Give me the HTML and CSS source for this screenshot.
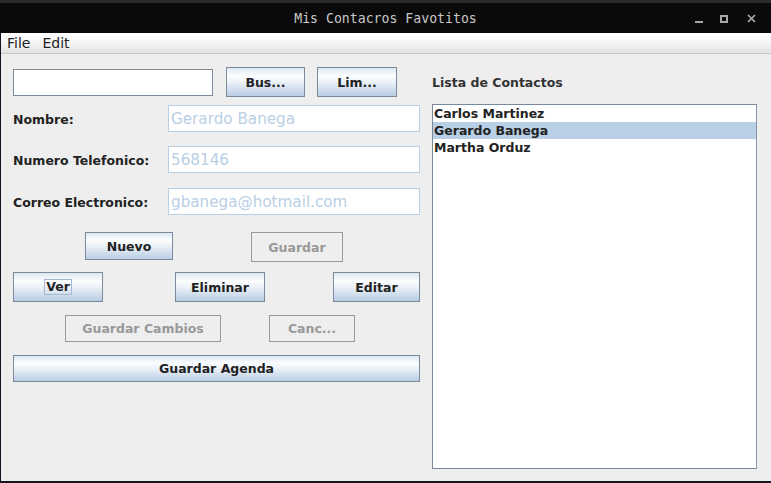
FILE: index.html
```html
<!DOCTYPE html>
<html>
<head>
<meta charset="utf-8">
<link rel="stylesheet" href="styles.css">
</head>
<body>
<div class="screen">
  <div class="desk-strip"></div>
  <div class="titlebar">
    <span class="title">Mis Contacros Favotitos</span>
    <div class="controls">
      <span class="ctl ctl-min"></span>
      <span class="ctl ctl-max"></span>
      <svg class="ctl-close" width="9" height="9" viewBox="0 0 9 9"><path d="M1 1 L8 8 M8 1 L1 8" stroke="#b0b0b0" stroke-width="1.6"/></svg>
    </div>
  </div>
  <div class="window">
    <div class="menubar">
      <span class="menu">File</span>
      <span class="menu">Edit</span>
    </div>
    <div class="content">
      <div class="left">
        <div class="row row-search">
          <div class="search"></div>
          <button class="btn btn-bus">Bus...</button>
          <button class="btn btn-lim">Lim...</button>
        </div>
        <div class="row field-row r-nombre">
          <span class="label">Nombre:</span>
          <div class="field">Gerardo Banega</div>
        </div>
        <div class="row field-row r-tel">
          <span class="label">Numero Telefonico:</span>
          <div class="field">568146</div>
        </div>
        <div class="row field-row r-mail">
          <span class="label">Correo Electronico:</span>
          <div class="field">gbanega@hotmail.com</div>
        </div>
        <div class="row r-nuevo">
          <button class="btn btn-nuevo">Nuevo</button>
          <button class="btn disabled btn-guardar">Guardar</button>
        </div>
        <div class="row r-ver">
          <button class="btn btn-ver"><span class="focus">Ver</span></button>
          <button class="btn btn-elim">Eliminar</button>
          <button class="btn btn-edit">Editar</button>
        </div>
        <div class="row r-cambios">
          <button class="btn disabled btn-cambios">Guardar Cambios</button>
          <button class="btn disabled btn-canc">Canc...</button>
        </div>
        <div class="row r-agenda">
          <button class="btn btn-agenda">Guardar Agenda</button>
        </div>
      </div>
      <div class="right">
        <div class="list-label">Lista de Contactos</div>
        <div class="list">
          <div class="item">Carlos Martinez</div>
          <div class="item selected">Gerardo Banega</div>
          <div class="item">Martha Orduz</div>
        </div>
      </div>
    </div>
  </div>
  <div class="bottom-strip"></div>
</div>
</body>
</html>
```

FILE: styles.css
```css
* { box-sizing: border-box; }
html, body { margin: 0; padding: 0; }
body {
  width: 771px;
  height: 483px;
  overflow: hidden;
  background: #1a1e26;
  font-family: "DejaVu Sans", sans-serif;
}
.screen {
  width: 771px;
  height: 483px;
  display: flex;
  flex-direction: column;
}
.desk-strip {
  height: 3px;
  background: #2a2c30;
}
.titlebar {
  height: 30px;
  background: #0a0a0a;
  display: flex;
  align-items: center;
  justify-content: center;
  position: relative;
}
.title {
  font-family: "DejaVu Sans Mono", monospace;
  font-size: 13.2px;
  color: #c8c8c8;
  margin-left: 0;
}
.controls {
  position: absolute;
  right: 0;
  top: 0;
  height: 30px;
  display: flex;
  align-items: center;
}
.ctl-min {
  width: 8px;
  height: 2px;
  background: #a8a8a8;
  margin-top: 8px;
  margin-right: 17px;
}
.ctl-max {
  width: 8px;
  height: 8px;
  border: 2px solid #a8a8a8;
  margin-top: 1px;
  margin-right: 19px;
}
.ctl-close {
  margin-right: 15px;
  margin-top: 0px;
}
.window {
  flex: 1;
  min-height: 0;
  display: flex;
  flex-direction: column;
  background: #eeeeee;
  border-left: 1px solid #0f1520;
}
.menubar {
  height: 21px;
  background: linear-gradient(#ffffff, #f2f2f2 60%, #e2e2e2);
  border-bottom: 1px solid #c8c8c8;
  display: flex;
  align-items: center;
  padding-left: 6px;
  gap: 12px;
  font-size: 14px;
  color: #222;
}
.content {
  display: flex;
  padding-left: 12px;
  gap: 12px;
}
.left {
  width: 407px;
  display: flex;
  flex-direction: column;
}
.row { display: flex; align-items: center; }
.row-search { margin-top: 13px; height: 30px; }
.search {
  width: 200px;
  height: 27px;
  background: #fff;
  border: 1px solid #7a8a99;
  border-top-color: #7f8b96;
}
.btn {
  font-family: "DejaVu Sans", sans-serif;
  font-weight: bold;
  font-size: 12.5px;
  color: #222;
  height: 30px;
  border: 1px solid #7a8a99;
  background: linear-gradient(#dde8f3 0%, #fcfdfe 28%, #f0f5fa 45%, #b9cde3 100%);
  padding: 0;
  display: flex;
  align-items: center;
  justify-content: center;
}
.btn.disabled {
  background: transparent;
  border-color: #9a9a9a;
  color: #999999;
}
.btn-bus { width: 79px; margin-left: 13px; }
.btn-lim { width: 80px; margin-left: 12px; }
.field-row { height: 27px; }
.r-nombre { margin-top: 8px; }
.r-tel { margin-top: 14px; }
.r-mail { margin-top: 15px; }
.label {
  width: 155px;
  font-weight: bold;
  font-size: 12.5px;
  color: #222;
  padding-top: 1px;
}
.field {
  width: 252px;
  height: 27px;
  background: #fff;
  border: 1px solid #b8cfe5;
  color: #b8cfe5;
  font-size: 15.2px;
  padding-left: 2px;
  display: flex;
  align-items: center;
}
.r-nuevo { margin-top: 17px; align-items: flex-start; height: 30px; }
.btn-nuevo { width: 88px; height: 28px; margin-left: 72px; }
.btn-guardar { width: 92px; margin-left: 78px; }
.r-ver { margin-top: 10px; height: 30px; }
.btn-ver { width: 90px; }
.btn-elim { width: 90px; margin-left: 72px; }
.btn-edit { width: 87px; margin-left: 68px; }
.focus {
  border: 1px solid #a3b8d0;
  padding: 0 1px;
  line-height: 14px;
}
.r-cambios { margin-top: 13px; height: 27px; }
.btn-cambios { width: 156px; height: 27px; margin-left: 52px; }
.btn-canc { width: 86px; height: 27px; margin-left: 48px; }
.r-agenda { margin-top: 13px; }
.btn-agenda { width: 407px; height: 27px; }
.right {
  width: 325px;
  display: flex;
  flex-direction: column;
}
.list-label {
  margin-top: 20px;
  font-size: 12.5px;
  font-weight: bold;
  color: #333;
  height: 17px;
  line-height: 17px;
}
.list {
  margin-top: 13px;
  height: 365px;
  background: #fff;
  border: 1px solid #7a8a99;
  border-right-color: #8898a8;
}
.item {
  height: 17px;
  line-height: 17px;
  padding-left: 1px;
  font-weight: bold;
  font-size: 12.5px;
  color: #222;
}
.item.selected { background: #b8cfe5; }
.bottom-strip {
  height: 2px;
  background: #111820;
}
```
